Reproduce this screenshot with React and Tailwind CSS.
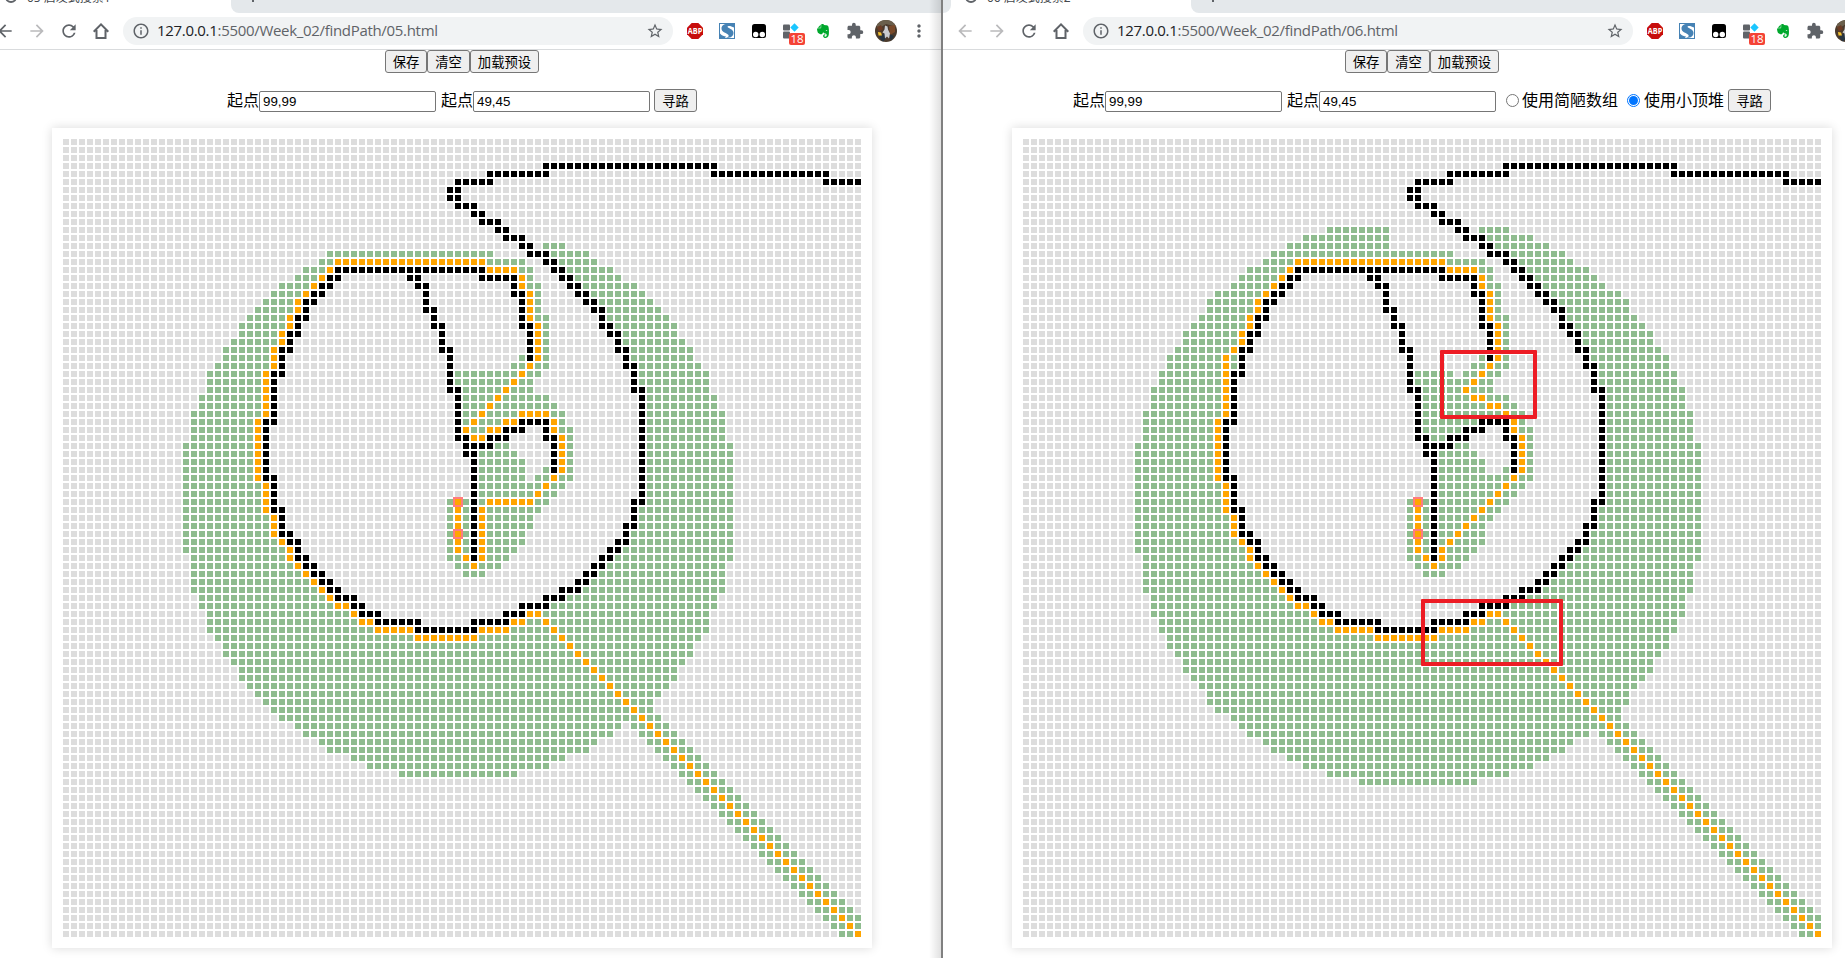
import React from "react";
import { MdArrowBack, MdArrowForward, MdRefresh, MdInfoOutline, MdStarBorder, MdExtension, MdMoreVert } from "react-icons/md";
import { FaEvernote } from "react-icons/fa";

// Every table below holds one line per grid row: "row:from-to,from-to".
const WALLS = `3:60-81 4:53-60,81-95 5:49-53,95-99 6:48-49 7:48-49 8:49-51 9:51-52 10:52-54 11:54-55 12:55-57 13:57-58 14:58-60 15:60-61
16:34-52,61-62 17:33-34,43-44,52-56,62-63 18:32-33,44-45,56,63-64 19:31-32,45,56-57,64-65 20:30-31,45,57,65-66 21:30,45-46,57,66-67
22:29-30,46,57,67 23:29,46-47,57-58,67-68 24:28-29,47,58,68-69 25:28,47,58,69 26:27-28,47-48,58,69-70 27:27,48,58,70 28:27,48,70-71
29:26-27,48,71 30:26,48,71 31:26,48-49,71-72 32:26,49,72 33:26,49,72 34:26,49,72 35:25-26,49,57-60,72 36:25,49,55-57,60,72
37:25,49-50,53-55,60-61,72 38:25,50-53,61,72 39:25,50-51,61,72 40:25,51,61,72 41:25,51,61,72 42:25-26,51,72 43:26,51,72 44:26,51,72
45:26,51,71-72 46:26-27,51,71 47:27,51,71 48:27,51,70-71 49:27-28,51,70 50:28-29,51,69-70 51:29,51,68-69 52:29-30,51,67-68
53:30-31,66-67 54:31-32,65-66 55:32-33,64-65 56:33-34,62-64 57:34-36,60-62 58:36-37,57-60 59:37-39,55-57 60:39-44,51-55 61:44-51`;

const VISITED_ARRAY = `13:60-62 14:33-53,61-65 15:32-57,62-66 16:30-33,53-58,63-68 17:29-32,57-58,64-69 18:27-31,57-59,65-71 19:26-30,58-59,66-72
20:25-29,58-59,67-73 21:24-29,58-59,68-74 22:23-28,58-60,68-75 23:22-28,59-60,69-76 24:22-27,59-60,70-76 25:21-27,59-60,70-77
26:20-26,59-60,71-78 27:20-26,57-60,71-78 28:19-26,56-60,72-79 29:18-25,49-59,72-80 30:18-25,49-58,72-80 31:18-25,50-58,73-80
32:17-25,50-60,73-81 33:17-25,50-61,73-81 34:16-25,50-62,73-82 35:16-24,50-56,61-62,73-82 36:16-24,50-54,61-63,73-82
37:16-24,51-52,62-63,73-82 38:15-24,54-55,62-63,73-83 39:15-24,52-56,62-63,73-83 40:15-24,52-57,62-63,73-83 41:15-24,52-57,60-63,73-83
42:15-24,52-57,59-63,73-83 43:15-25,52-62,73-83 44:15-25,52-61,73-83 45:15-25,48-50,52-60,73-83 46:15-25,48-50,52-59,72-83
47:15-26,48-50,52-58,72-83 48:15-26,48-50,52-58,72-83 49:15-26,48-50,52-57,71-83 50:15-27,48-50,52-57,71-83 51:15-28,48-50,52-56,70-83
52:16-28,48-50,52-55,69-83 53:16-29,49-54,68-82 54:16-30,50-52,67-82 55:16-31,66-82 56:16-32,65-82 57:17-33,63-81 58:17-35,61-81
59:18-36,58-80 60:18-38,56-80 61:18-80 62:19-79 63:20-78 64:20-78 65:21-77 66:22-76 67:22-76 68:23-75 69:24-74 70:25-73 71:26-73
72:27-74 73:29-69 74:30-68 75:32-66 76:33-65 77:36-62 78:38-60 79:42-56`;

const VISITED_HEAP = `11:38-45,57-60 12:35-45,58-63 13:33-45,59-65 14:31-53,61-67 15:30-57,62-68 16:28-33,53-58,63-70 17:27-32,57-58,64-71
18:26-31,57-59,65-72 19:24-30,58-59,66-74 20:23-29,58-59,67-75 21:23-29,58-59,68-75 22:22-28,58-60,68-76 23:21-28,59-60,69-77
24:20-27,59-60,70-78 25:20-27,59-60,70-78 26:19-26,59-60,71-79 27:18-26,57-60,71-80 28:18-26,56-60,72-80 29:17-25,49-53,55-59,72-81
30:17-25,49-58,72-81 31:16-25,50-58,73-82 32:16-25,50-60,73-82 33:16-25,50-61,73-82 34:15-25,50-62,73-83 35:15-24,50-56,61-62,73-83
36:15-24,50-54,61-63,73-83 37:15-24,51-52,62-63,73-83 38:14-24,54-55,62-63,73-84 39:14-24,52-56,62-63,73-84 40:14-24,52-57,62-63,73-84
41:14-24,52-57,60-63,73-84 42:14-24,52-63,73-84 43:14-25,52-62,73-84 44:14-25,52-61,73-84 45:14-25,48-50,52-60,73-84
46:14-25,48-50,52-59,72-84 47:14-26,48-50,52-58,72-84 48:14-26,48-50,52-57,72-84 49:14-26,48-50,52-57,71-84 50:14-27,48-50,52-57,71-84
51:14-28,48-50,52-56,70-84 52:15-28,48-50,52-55,69-84 53:15-29,49-54,68-83 54:15-30,50-52,67-83 55:15-31,66-83 56:15-32,65-83
57:16-33,63-82 58:16-35,61-82 59:16-36,58-82 60:17-38,56-81 61:17-81 62:18-80 63:18-80 64:19-79 65:20-78 66:20-78 67:21-77 68:22-76
69:23-75 70:23-75 71:24-74 72:26-74 73:27-75 74:28-70 75:30-68 76:31-67 77:33-65 78:35-63 79:38-60 80:42-56`;

const PATH_ARRAY = `15:34-52 16:33,53-56 17:32,57 18:31,57 19:30,58 20:29,58 21:29,58 22:28,58 23:28,59 24:27,59 25:27,59 26:26,59 27:26,59 28:26,58
29:25,57 30:25,56 31:25,55 32:25,54 33:25,53 34:25,52,57-60 35:24,51,55-56,61 36:24,50,53-54,61 37:24,51-52,62 38:24,62 39:24,62 40:24,62
41:24,62 42:24,61 43:25,60 44:25,59 45:25,49,53-58 46:25,49,52 47:26,49,52 48:26,49,52 49:26,49,52 50:27,49,52 51:28,49,52 52:28,50,52
53:29,51 54:30 55:31 56:32 57:33 58:34-35 59:36,58-59 60:37-38,56-57,60 61:39-43,52-55,61 62:44-51,62`;

const PATH_HEAP = `15:34-52 16:33,53-56 17:32,57 18:31,57 19:30,58 20:29,58 21:29,58 22:28,58 23:28,59 24:27,59 25:27,59 26:26,59 27:25,59 28:25,58
29:25,57 30:25,56 31:25,55 32:25,56-57 33:25,58-59 34:25,60 35:24,61 36:24,61 37:24,62 38:24,62 39:24,62 40:24,62
41:24,62 42:24,61 43:25,60 44:25,59 45:25,49,58 46:25,49,57 47:26,49,56 48:26,49,55 49:26,49,54 50:27,49,53 51:28,49,52 52:28,50,52
53:29,51 54:30 55:31 56:32 57:33 58:34-35 59:36,58-59 60:37-38,56-57,60 61:39-43,52-55,61 62:44-51,62`;

const EMPTY = 0;
const VISITED = 1;
const PATH = 2;
const WALL = 3;

const CELL = {
  [EMPTY]: "m-px size-1.5 bg-[#dddddd]",
  [VISITED]: "m-px size-1.5 bg-[#8fbc8f]",
  [PATH]: "m-px size-1.5 bg-[#ffa500]",
  [WALL]: "m-px size-1.5 bg-black",
};
const ENDPOINT = "m-px size-1.5 bg-[#ffa500] outline-2 outline-[#ff7c80]";

function paint(map, table, value) {
  for (const line of table.trim().split(/\s+/)) {
    const [row, ranges] = line.split(":");
    for (const range of ranges.split(",")) {
      const [from, to = from] = range.split("-");
      for (let c = +from; c <= +to; c++) map[+row * 100 + c] = value;
    }
  }
}

function buildMap(visited, path) {
  const map = new Array(10000).fill(EMPTY);
  paint(map, visited, VISITED);
  for (let r = 73; r < 100; r++) {
    for (let c = r - 2; c <= Math.min(99, r + 2); c++) map[r * 100 + c] = VISITED;
  }
  for (let r = 63; r < 100; r++) map[r * 101] = PATH;
  paint(map, path, PATH);
  paint(map, WALLS, WALL);
  return map;
}

const MAP_ARRAY = buildMap(VISITED_ARRAY, PATH_ARRAY);
const MAP_HEAP = buildMap(VISITED_HEAP, PATH_HEAP);

function Board({ map, children }) {
  return (
    <div className="relative mt-4 w-[820px] shrink-0 bg-white p-2.5 shadow-[0_0_10px_rgba(0,0,0,0.15)]">
      <div className="grid grid-cols-[repeat(100,8px)]">
        {map.map((v, i) => (
          <div key={i} className={i === 4549 || i === 4949 ? ENDPOINT : CELL[v]} />
        ))}
      </div>
      {children}
    </div>
  );
}

function HomeIcon() {
  return (
    <svg viewBox="0 0 16 16" className="size-4" fill="none" stroke="#5f6368" strokeWidth="2">
      <path d="M0.7 8.7 8 1.400l7.300 7.300M3.500 7v8h9V7" />
    </svg>
  );
}

function AbpIcon() {
  return (
    <svg viewBox="0 0 16 16" className="size-4">
      <path d="M4.7 0h6.6L16 4.7v6.6L11.3 16H4.7L0 11.3V4.7z" fill="#c70d0c" />
      <text x="0.8" y="11" fontSize="8.500" fontWeight="700" fontFamily="Open Sans, sans-serif" textLength="14.400" lengthAdjust="spacingAndGlyphs" fill="#fff">ABP</text>
    </svg>
  );
}

function StylishIcon() {
  return (
    <svg viewBox="0 0 16 16" className="size-4">
      <rect x="0.5" y="0.5" width="15" height="15" fill="#fff" stroke="#4682b4" />
      <path d="M15 1v3.500C12 2.600 8.500 2.400 8.500 3.800c0 1.600 6 2.200 6 6C14.500 13 12 15 8 15h-1c2.500-.8 3.500-2 2-3.500C7 9.800 2.500 9 2.500 5.500 2.500 3 4.500 1 8 1z" fill="#4682b4" />
      <path d="M1 10.500C3 12.800 5 13.300 7 13.500L6 15H1z" fill="#4682b4" />
    </svg>
  );
}

function MonkeyIcon() {
  return (
    <svg viewBox="0 0 14 14" className="size-3.5">
      <rect width="14" height="14" rx="2.500" fill="#000" />
      <circle cx="3.700" cy="10.500" r="2.700" fill="#fff" />
      <circle cx="10.300" cy="10.500" r="2.700" fill="#fff" />
    </svg>
  );
}

function BlocksIcon() {
  return (
    <div className="relative size-4">
      <svg viewBox="0 0 16 16" className="size-4">
        <rect x="0" y="1.500" width="7" height="6" rx="1" fill="#5f6368" />
        <rect x="0" y="8.500" width="7" height="7" rx="1" fill="#5f6368" />
        <path d="M11.500 0.300 15.700 4.500 11.500 8.700 7.300 4.500z" fill="#1ac6ff" />
      </svg>
      <span className="absolute top-[10px] left-1.5 flex h-3 w-4 items-center justify-center rounded-[2px] bg-[#f44336] font-['Open_Sans'] text-[11.5px] leading-3 text-white">18</span>
    </div>
  );
}

function Avatar() {
  return (
    <svg viewBox="0 0 22 22" className="size-[22px]">
      <defs>
        <clipPath id="face"><circle cx="11" cy="11" r="11" /></clipPath>
      </defs>
      <g clipPath="url(#face)">
        <rect width="22" height="22" fill="#4b3a2c" />
        <path d="M0 0h22v7L11 4 3 9z" fill="#6a5f4c" />
        <path d="M14 6l6-1v7l-5 3z" fill="#7a4a2a" />
        <path d="M2 7l4-2 2 4-4 3z" fill="#6b3b24" />
        <path d="M4 17l5-4 2 5-3 4zM14 14l5 2-3 5z" fill="#27343f" />
        <path d="M10 5.500l2.500 1 .5 3 2 4-1 5-2-2-2 2-.5-5-2-1 2-3z" fill="#c9ccd0" />
        <path d="M3 12l3 .5 1 3-3.500 0z" fill="#f2c230" />
      </g>
    </svg>
  );
}

function Chrome({ page, title, canGoBack, className }) {
  return (
    <div className={className}>
      <div className="flex h-[13px] bg-white">
        <div className="w-2 shrink-0 rounded-br-lg bg-[#e4e8eb]" />
        <div className="flex w-60 shrink-0">
          <span className="-mt-[9px] ml-[14px] size-3 shrink-0 rounded-full border-2 border-[#5f6368]" />
          <span className="-mt-[10px] ml-2.5 font-['Noto_Sans','Noto_Sans_CJK_SC',sans-serif] text-[12px] leading-4 whitespace-nowrap text-[#45494d]">{title}</span>
        </div>
        <div className="h-[13px] flex-1 rounded-bl-lg bg-[#e4e8eb]">
          <div className="ml-[21px] h-0.5 w-0.5 bg-[#5f6368]" />
        </div>
      </div>
      <div className="flex h-[37px] items-center border-b border-[#d9dbdd] bg-white pl-0.5 text-[#5f6368]">
        <MdArrowBack className={canGoBack ? "ml-2.5 size-5 shrink-0" : "ml-2.5 size-5 shrink-0 text-[#bababc]"} />
        <MdArrowForward className="ml-3 size-5 shrink-0 text-[#bababc]" />
        <MdRefresh className="ml-3 size-5 shrink-0" />
        <div className="ml-3.5 shrink-0"><HomeIcon /></div>
        <div className="ml-3.5 flex h-7 w-[550px] shrink-0 items-center rounded-full bg-[#f1f3f4]">
          <MdInfoOutline className="ml-[9px] size-[18px] shrink-0" />
          <span className="mb-0.5 ml-[7px] w-[489px] shrink-0 font-['Open_Sans'] text-[15px] leading-6 tracking-[-0.31px] text-[#5f6368]">
            <span className="text-[#202124]">127.0.0.1</span>:5500/Week_02/findPath/{page}
          </span>
          <MdStarBorder className="size-[18px] shrink-0" />
        </div>
        <div className="ml-3.5 flex shrink-0 items-center gap-4">
          <AbpIcon />
          <StylishIcon />
          <div className="w-4 pl-px"><MonkeyIcon /></div>
          <BlocksIcon />
          <FaEvernote className="size-4 text-[#00a82d]" />
          <MdExtension className="-mx-px size-[18px]" />
        </div>
        <div className="ml-3 shrink-0"><Avatar /></div>
        <MdMoreVert className="ml-3 size-5 shrink-0" />
      </div>
    </div>
  );
}

function Button({ children, className = "" }) {
  return (
    <button className={"h-[23px] shrink-0 rounded-[3px] border border-[#767676] bg-[#efefef] text-center text-[13.33px] leading-5 whitespace-nowrap text-black " + className}>
      {children}
    </button>
  );
}

function Field({ value }) {
  return (
    <input
      defaultValue={value}
      className="h-[21px] w-[177px] shrink-0 rounded-[2px] border border-[#767676] bg-white px-[3px] font-['Liberation_Sans'] text-[13.33px] text-black"
    />
  );
}

function Radio({ on }) {
  return on ? (
    <span className="flex size-[13px] shrink-0 items-center justify-center rounded-full border border-[#0075ff] bg-white">
      <span className="size-[9px] rounded-full bg-[#0075ff]" />
    </span>
  ) : (
    <span className="size-[13px] shrink-0 rounded-full border border-[#767676] bg-white" />
  );
}

function Toolbar() {
  return (
    <div className="flex">
      <Button className="w-[42px]">保存</Button>
      <Button className="w-[43px]">清空</Button>
      <Button className="w-[69px]">加载预设</Button>
    </div>
  );
}

function FindForm({ children }) {
  return (
    <div className="mt-4 flex h-[23px] items-end text-base leading-[21px] whitespace-nowrap">
      <span className="mb-0.5">起点</span>
      <Field value="99,99" />
      <span className="mb-0.5 ml-[5px]">起点</span>
      <Field value="49,45" />
      {children}
      <Button className="ml-1 w-[43px]">寻路</Button>
    </div>
  );
}

export default function App() {
  return (
    <div className="flex h-[958px] w-[1845px] overflow-hidden bg-white font-['Noto_Sans_CJK_SC',sans-serif] text-black">
      <section className="relative w-[941px] shrink-0 overflow-hidden">
        <Chrome page="05.html" title="05 启发式搜索1" canGoBack className="-ml-[17px] w-[958px]" />
        <div className="flex w-[924px] flex-col items-center">
          <Toolbar />
          <FindForm />
          <Board map={MAP_ARRAY} />
        </div>
        <div className="absolute inset-y-0 right-0 w-3 bg-linear-to-l from-black/12 to-transparent" />
      </section>
      <section className="w-[904px] shrink-0 overflow-hidden border-l-2 border-[#808080]">
        <Chrome page="06.html" title="06 启发式搜索2" className="w-[1000px]" />
        <div className="flex w-[958px] flex-col items-center">
          <Toolbar />
          <FindForm>
            <span className="mb-[5px] ml-2.5 flex"><Radio /></span>
            <span className="mb-0.5 ml-[3px]">使用简陋数组</span>
            <span className="mb-[5px] ml-[9px] flex"><Radio on /></span>
            <span className="mb-0.5 ml-1">使用小顶堆</span>
          </FindForm>
          <Board map={MAP_HEAP}>
            <div className="absolute top-[222px] left-[428px] h-[69px] w-[97px] rounded-[1px] border-4 border-[#ed1c24]" />
            <div className="absolute top-[471px] left-[409px] h-[67px] w-[142px] rounded-[1px] border-4 border-[#ed1c24]" />
          </Board>
        </div>
      </section>
    </div>
  );
}
